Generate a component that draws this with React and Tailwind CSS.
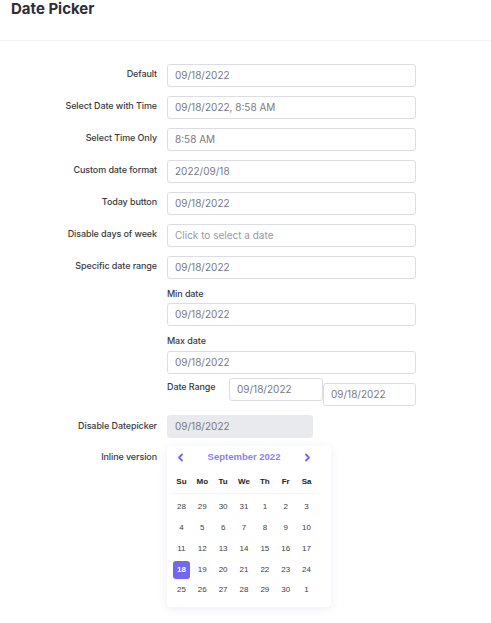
import React from "react";

const font = { fontFamily: "Inter, 'Noto Sans', sans-serif" };

function Input({ value, className = "", placeholder = false, disabled = false }) {
  return (
    <div
      className={`h-[23px] border border-[#dcdde1] rounded-[3px] flex items-center pl-[7px] text-[10px] ${
        placeholder ? "text-[#9a9aa2]" : "text-[#7a7a82]"
      } ${disabled ? "bg-[#e8eaed] border-[#e8eaed]" : "bg-white"} ${className}`}
    >
      {value}
    </div>
  );
}

const labelCls = "text-[9px] tracking-[-0.1px] font-medium text-[#3a3a40] leading-[14px]";

function Row({ label, children, className = "", labelPad = "pt-[3px]" }) {
  return (
    <div className={`flex ${className}`}>
      <div className={`w-[157px] shrink-0 text-right ${labelPad} ${labelCls}`}>{label}</div>
      <div className="ml-[10px] w-[249px]">{children}</div>
    </div>
  );
}

const weeks = [
  [28, 29, 30, 31, 1, 2, 3],
  [4, 5, 6, 7, 8, 9, 10],
  [11, 12, 13, 14, 15, 16, 17],
  [18, 19, 20, 21, 22, 23, 24],
  [25, 26, 27, 28, 29, 30, 1],
];

function Calendar() {
  const cal = { fontFamily: "'Liberation Sans', Arial, sans-serif" };
  return (
    <div
      className="w-[164px] bg-white rounded-[4px] shadow-[0_2px_10px_rgba(80,80,160,0.10)] pb-[6px]"
      style={cal}
    >
      <div className="h-[22px] w-[146px] ml-[4px] flex items-center justify-between px-[6px] pt-[1px]">
        <svg width="7" height="9" viewBox="0 0 7 9">
          <path d="M5 1.5 L2 4.5 L5 7.5" fill="none" stroke="#7367f0" strokeWidth="1.8" strokeLinecap="round" strokeLinejoin="round" />
        </svg>
        <span className="text-[9.5px] font-bold text-[#8a7ff3]">September 2022</span>
        <svg width="7" height="9" viewBox="0 0 7 9">
          <path d="M2 1.5 L5 4.5 L2 7.5" fill="none" stroke="#7367f0" strokeWidth="1.8" strokeLinecap="round" strokeLinejoin="round" />
        </svg>
      </div>
      <div className="grid grid-cols-7 w-[146px] ml-[4px] mt-[2px] h-[24px] items-center text-[8px] font-bold text-[#222] border-b border-[#f3f3f6]">
        {["Su", "Mo", "Tu", "We", "Th", "Fr", "Sa"].map((d) => (
          <div key={d} className="text-center">{d}</div>
        ))}
      </div>
      <div className="w-[146px] ml-[4px] pt-[3px]">
        {weeks.map((w, i) => (
          <div key={i} className="grid grid-cols-7 h-[20.75px] items-center text-[8px] font-medium text-[#3d3d48]">
            {w.map((d, j) => (
              <div key={j} className="flex justify-center">
                {i === 3 && j === 0 ? (
                  <span className="w-[17px] h-[18px] rounded-[3px] bg-[#7367f0] text-white font-bold flex items-center justify-center">
                    {d}
                  </span>
                ) : (
                  <span>{d}</span>
                )}
              </div>
            ))}
          </div>
        ))}
      </div>
    </div>
  );
}

export default function App() {
  return (
    <div className="w-[491px] h-[623px] bg-white overflow-hidden" style={font}>
      <div className="h-[41px] border-b border-[#f2f2f4] pl-[11px]">
        <div className="text-[15px] font-bold text-[#2e2e36] leading-[18px]">Date Picker</div>
      </div>
      <div className="pt-[23px]">
        <div className="flex flex-col gap-[9px]">
          <Row label="Default"><Input value="09/18/2022" /></Row>
          <Row label="Select Date with Time"><Input value="09/18/2022, 8:58 AM" /></Row>
          <Row label="Select Time Only"><Input value="8:58 AM" /></Row>
          <Row label="Custom date format"><Input value="2022/09/18" /></Row>
          <Row label="Today button"><Input value="09/18/2022" /></Row>
          <Row label="Disable days of week"><Input value="Click to select a date" placeholder /></Row>
          <Row label="Specific date range">
            <Input value="09/18/2022" />
            <div className={`mt-[8px] ${labelCls}`}>Min date</div>
            <Input value="09/18/2022" className="mt-[2px]" />
            <div className={`mt-[8px] ${labelCls}`}>Max date</div>
            <Input value="09/18/2022" className="mt-[3px]" />
            <div className="flex items-start mt-[4px]">
              <div className={`w-[62px] pt-[2px] ${labelCls}`}>Date Range</div>
              <Input value="09/18/2022" className="w-[94px]" />
              <Input value="09/18/2022" className="w-[93px] mt-[5px]" />
            </div>
          </Row>
          <Row label="Disable Datepicker" labelPad="pt-[4px]">
            <Input value="09/18/2022" disabled className="w-[146px]" />
          </Row>
          <Row label="Inline version" className="mt-[-1px]" labelPad="pt-[4px]">
            <Calendar />
          </Row>
        </div>
      </div>
    </div>
  );
}
